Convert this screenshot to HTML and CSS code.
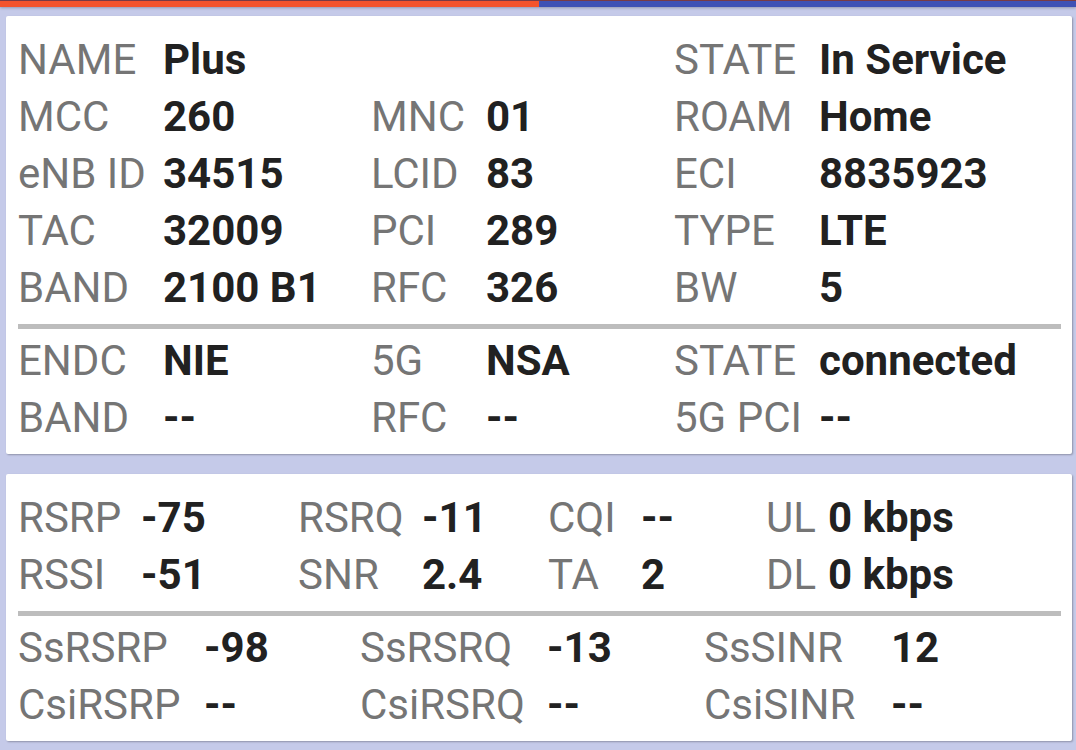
FILE: index.html
```html
<!DOCTYPE html>
<html>
<head>
<meta charset="utf-8">
<link rel="stylesheet" href="styles.css">
</head>
<body>
<div class="topbar"><div class="progress"></div><div class="rest"></div></div>
<main class="page">
  <section class="card card-cell">
    <div class="grid g-cell">
      <span class="lbl">NAME</span><span class="val">Plus</span><span class="lbl"></span><span class="val"></span><span class="lbl">STATE</span><span class="val">In Service</span>
      <span class="lbl">MCC</span><span class="val">260</span><span class="lbl">MNC</span><span class="val">01</span><span class="lbl">ROAM</span><span class="val">Home</span>
      <span class="lbl">eNB ID</span><span class="val">34515</span><span class="lbl">LCID</span><span class="val">83</span><span class="lbl">ECI</span><span class="val">8835923</span>
      <span class="lbl">TAC</span><span class="val">32009</span><span class="lbl">PCI</span><span class="val">289</span><span class="lbl">TYPE</span><span class="val">LTE</span>
      <span class="lbl">BAND</span><span class="val">2100 B1</span><span class="lbl">RFC</span><span class="val">326</span><span class="lbl">BW</span><span class="val">5</span>
    </div>
    <div class="divider"></div>
    <div class="grid g-cell">
      <span class="lbl">ENDC</span><span class="val">NIE</span><span class="lbl">5G</span><span class="val">NSA</span><span class="lbl">STATE</span><span class="val">connected</span>
      <span class="lbl">BAND</span><span class="val">--</span><span class="lbl">RFC</span><span class="val">--</span><span class="lbl">5G PCI</span><span class="val">--</span>
    </div>
  </section>
  <section class="card card-signal">
    <div class="grid g-sig">
      <span class="lbl">RSRP</span><span class="val">-75</span><span class="lbl">RSRQ</span><span class="val">-11</span><span class="lbl">CQI</span><span class="val">--</span><span class="lbl">UL</span><span class="val">0 kbps</span>
      <span class="lbl">RSSI</span><span class="val">-51</span><span class="lbl">SNR</span><span class="val">2.4</span><span class="lbl">TA</span><span class="val">2</span><span class="lbl">DL</span><span class="val">0 kbps</span>
    </div>
    <div class="divider"></div>
    <div class="grid g-nr">
      <span class="lbl">SsRSRP</span><span class="val">-98</span><span class="lbl">SsRSRQ</span><span class="val">-13</span><span class="lbl">SsSINR</span><span class="val">12</span>
      <span class="lbl">CsiRSRP</span><span class="val">--</span><span class="lbl">CsiRSRQ</span><span class="val">--</span><span class="lbl">CsiSINR</span><span class="val">--</span>
    </div>
  </section>
</main>
</body>
</html>
```
FILE: styles.css
```css
html, body {
  margin: 0;
  padding: 0;
}
body {
  background: #c5cae9;
  font-family: Roboto, "Noto Sans", sans-serif;
  width: 1076px;
  height: 750px;
  overflow: hidden;
}
.topbar {
  display: flex;
  height: 7px;
  box-shadow: 0 1px 3px rgba(0,0,0,0.25);
  border-top: 1px solid #7a3b44;
  box-sizing: border-box;
}
.progress {
  width: 539px;
  background: #f4532c;
}
.rest {
  flex: 1;
  background: #3f51b5;
}
.page {
  display: flex;
  flex-direction: column;
  gap: 20px;
  padding: 9px 4px 0 6px;
}
.card {
  background: #fff;
  border-radius: 2px;
  box-shadow: 1px 1px 2px rgba(0,0,0,0.28);
  padding: 15px 11px 8px 12px;
}
.grid {
  display: grid;
  grid-auto-rows: 57px;
  font-size: 42px;
  line-height: 57px;
  white-space: nowrap;
}
.g-cell {
  grid-template-columns: 145px 208px 115px 188px 145px 1fr;
}
.g-sig {
  grid-template-columns: 123px 157px 124px 126px 93px 125px 62px 1fr;
}
.g-nr {
  grid-template-columns: 186px 156px 187px 157px 187px 1fr;
}
.lbl {
  color: #757575;
}
.val {
  color: #212121;
  font-weight: 700;
}
.divider {
  height: 5px;
  background: #bdbdbd;
  margin: 8px 0 3px 0;
}
```
